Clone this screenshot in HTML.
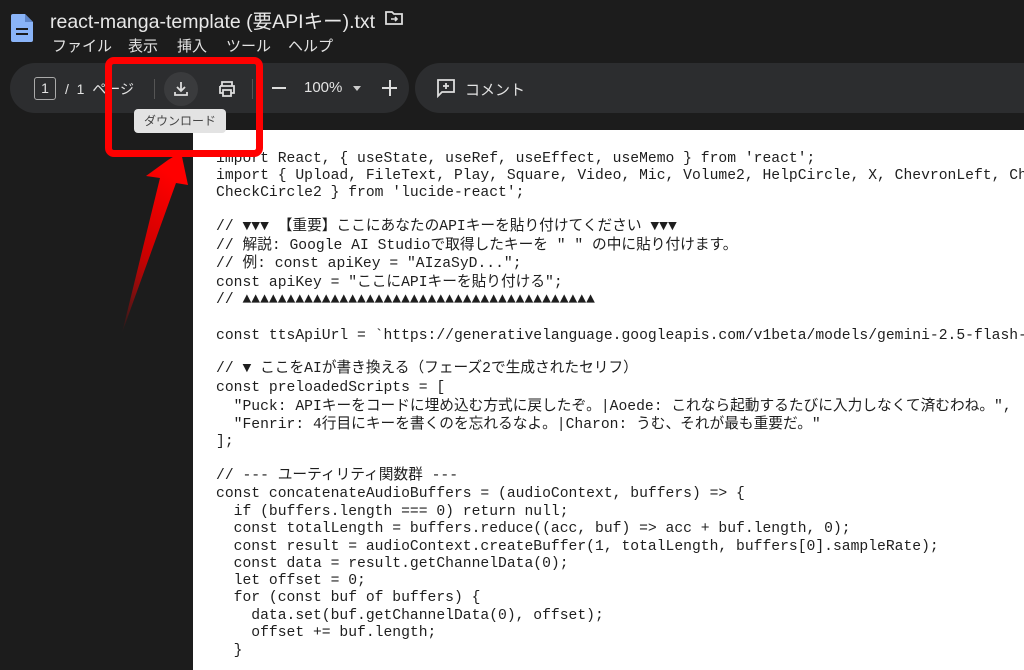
<!DOCTYPE html>
<html><head><meta charset="utf-8"><style>
*{margin:0;padding:0;box-sizing:border-box}
body{width:1024px;height:663px;background:#1c1c1c;overflow:hidden;position:relative;font-family:"Liberation Sans","Noto Sans CJK JP",sans-serif;color:#e3e3e3}
.abs{position:absolute}
.title{left:50px;top:5px;font-size:19.5px;color:#e8e8e8;white-space:nowrap}
.menu{top:35px;font-size:15px;color:#e3e3e3;white-space:nowrap}
.pill{background:#2c2d2f;border-radius:25px}
.page{left:193px;top:130px;width:840px;height:540px;background:#fff}
.code{position:absolute;left:216px;font-family:"Liberation Mono","Noto Sans CJK JP",monospace;font-size:14.7px;color:#1e1e1e;white-space:pre;line-height:18px}
</style></head><body>
<svg class="abs" style="left:11px;top:14px" width="22" height="28" viewBox="0 0 22 28"><path d="M2 0h12l8 8v18a2 2 0 0 1-2 2H2a2 2 0 0 1-2-2V2a2 2 0 0 1 2-2z" fill="#8ab4f8"/><path d="M14 0v8h8" fill="#5f86c9"/><rect x="5" y="14" width="12" height="2" fill="#1c1c1c"/><rect x="5" y="19" width="12" height="2" fill="#1c1c1c"/></svg>
<div class="abs title">react-manga-template (要APIキー).txt</div>
<svg class="abs" style="left:385px;top:10px" width="18" height="16" viewBox="0 0 18 16"><path d="M1 2h6l2 2h8v10H1z" fill="none" stroke="#ddd" stroke-width="1.8"/><path d="M6 9h6M10 7l2 2-2 2" fill="none" stroke="#ddd" stroke-width="1.6"/></svg>
<div class="abs menu" style="left:52px">ファイル</div>
<div class="abs menu" style="left:128px">表示</div>
<div class="abs menu" style="left:177px">挿入</div>
<div class="abs menu" style="left:226px">ツール</div>
<div class="abs menu" style="left:288px">ヘルプ</div>
<div class="abs pill" style="left:10px;top:63px;width:399px;height:50px"></div>
<div class="abs pill" style="left:415px;top:63px;width:640px;height:50px"></div>
<div class="abs" style="left:34px;top:77px;width:22px;height:23px;border:1.5px solid #aaa;border-radius:3px;font-size:14px;text-align:center;line-height:20px">1</div>
<div class="abs" style="left:65px;top:79px;font-size:14px;white-space:nowrap">/&nbsp; 1&nbsp; ページ</div>
<div class="abs" style="left:154px;top:79px;width:1px;height:20px;background:#555"></div>
<div class="abs" style="left:164px;top:72px;width:34px;height:34px;border-radius:50%;background:#3a3b3d"></div>
<svg class="abs" style="left:171px;top:79px" width="20" height="20" viewBox="0 0 20 20"><path d="M10 3v9M6 8l4 4 4-4M4 13v3h12v-3" fill="none" stroke="#ddd" stroke-width="1.8"/></svg>
<svg class="abs" style="left:217px;top:79px" width="20" height="20" viewBox="0 0 20 20"><path d="M5 7V3h10v4M3 7h14v7h-3M6 14H3V7M6 11h8v6H6z" fill="none" stroke="#ddd" stroke-width="1.8"/></svg>
<div class="abs" style="left:252px;top:79px;width:1px;height:20px;background:#555"></div>
<div class="abs" style="left:272px;top:87px;width:14px;height:2px;background:#ddd"></div>
<div class="abs" style="left:304px;top:79px;font-size:15px">100%</div>
<div class="abs" style="left:353px;top:86px;border:4px solid transparent;border-top:5px solid #ccc"></div>
<div class="abs" style="left:382px;top:87px;width:15px;height:2px;background:#ddd"></div>
<div class="abs" style="left:389px;top:80px;width:2px;height:16px;background:#ddd"></div>
<svg class="abs" style="left:436px;top:78px" width="20" height="20" viewBox="0 0 20 20"><path d="M2 2h16v12H6l-4 4z" fill="none" stroke="#ddd" stroke-width="1.8"/><path d="M10 5v6M7 8h6" stroke="#ddd" stroke-width="1.8"/></svg>
<div class="abs" style="left:465px;top:79px;font-size:15px">コメント</div>
<div class="page abs"></div>
<div class="abs" style="left:134px;top:109px;width:92px;height:24px;background:#e3e3e3;border-radius:4px;color:#444;font-size:12px;text-align:center;line-height:24px">ダウンロード</div>
<div class="code" style="top:150px">import React, { useState, useRef, useEffect, useMemo } from 'react';</div>
<div class="code" style="top:167px">import { Upload, FileText, Play, Square, Video, Mic, Volume2, HelpCircle, X, ChevronLeft, Ch</div>
<div class="code" style="top:184px">CheckCircle2 } from 'lucide-react';</div>
<div class="code" style="top:218px">// ▼▼▼ 【重要】ここにあなたのAPIキーを貼り付けてください ▼▼▼</div>
<div class="code" style="top:237px">// 解説: Google AI Studioで取得したキーを " " の中に貼り付けます。</div>
<div class="code" style="top:255px">// 例: const apiKey = "AIzaSyD...";</div>
<div class="code" style="top:274px">const apiKey = "ここにAPIキーを貼り付ける";</div>
<div class="code" style="top:291px">// ▲▲▲▲▲▲▲▲▲▲▲▲▲▲▲▲▲▲▲▲▲▲▲▲▲▲▲▲▲▲▲▲▲▲▲▲▲▲▲▲</div>
<div class="code" style="top:327px">const ttsApiUrl = `https://generativelanguage.googleapis.com/v1beta/models/gemini-2.5-flash-</div>
<div class="code" style="top:360px">// ▼ ここをAIが書き換える（フェーズ2で生成されたセリフ）</div>
<div class="code" style="top:379px">const preloadedScripts = [</div>
<div class="code" style="top:398px">  "Puck: APIキーをコードに埋め込む方式に戻したぞ。|Aoede: これなら起動するたびに入力しなくて済むわね。",</div>
<div class="code" style="top:416px">  "Fenrir: 4行目にキーを書くのを忘れるなよ。|Charon: うむ、それが最も重要だ。"</div>
<div class="code" style="top:433px">];</div>
<div class="code" style="top:467px">// --- ユーティリティ関数群 ---</div>
<div class="code" style="top:485px">const concatenateAudioBuffers = (audioContext, buffers) =&gt; {</div>
<div class="code" style="top:503px">  if (buffers.length === 0) return null;</div>
<div class="code" style="top:520px">  const totalLength = buffers.reduce((acc, buf) =&gt; acc + buf.length, 0);</div>
<div class="code" style="top:538px">  const result = audioContext.createBuffer(1, totalLength, buffers[0].sampleRate);</div>
<div class="code" style="top:555px">  const data = result.getChannelData(0);</div>
<div class="code" style="top:572px">  let offset = 0;</div>
<div class="code" style="top:589px">  for (const buf of buffers) {</div>
<div class="code" style="top:607px">    data.set(buf.getChannelData(0), offset);</div>
<div class="code" style="top:624px">    offset += buf.length;</div>
<div class="code" style="top:642px">  }</div>
<div class="abs" style="left:105px;top:57px;width:158px;height:100px;border:7px solid #f00;border-radius:9px"></div>
<svg class="abs" style="left:0;top:0" width="300" height="340"><defs><linearGradient id="g" x1="0" y1="1" x2="0.3" y2="0"><stop offset="0" stop-color="#f00" stop-opacity="0"/><stop offset="0.5" stop-color="#c00"/><stop offset="1" stop-color="#f00"/></linearGradient></defs><path d="M122 333L160 178L146 176L168 160L181 152L188 185L176 183Z" fill="url(#g)"/></svg>
</body></html>
